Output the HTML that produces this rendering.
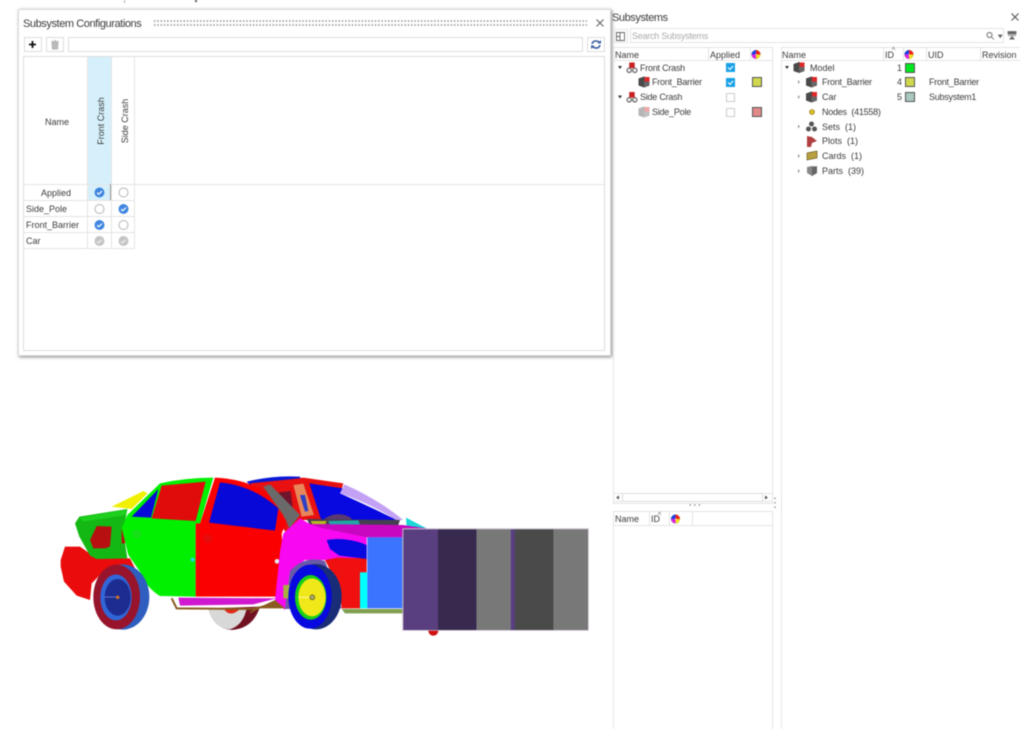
<!DOCTYPE html>
<html><head><meta charset="utf-8"><style>
html,body{margin:0;padding:0;background:#fff;}
#p{position:relative;width:1020px;height:729px;overflow:hidden;background:#fff;font-family:"Liberation Sans",sans-serif;color:#444;filter:blur(.45px);}
.a{position:absolute;box-sizing:border-box;}
.t{position:absolute;white-space:nowrap;font-size:9px;line-height:12px;color:#3c3c3c;}
.n{letter-spacing:-.24px;}
.h{font-size:11px;line-height:14px;letter-spacing:-.42px;}
.l{position:absolute;background:#e4e4e4;}
.sw{position:absolute;width:10px;height:10px;box-sizing:border-box;border:1px solid #555;}
.cb{position:absolute;width:9px;height:9px;box-sizing:border-box;border:1px solid #ccc;background:#fff;}
.cb.on{background:#19a0e6;border-color:#19a0e6;}
svg{position:absolute;overflow:visible;}
</style></head><body><div id="p">

<div class="a" style="left:124px;top:0;width:1px;height:3px;background:#aaa"></div>
<div class="a" style="left:195px;top:0;width:2px;height:2px;background:#555"></div>

<!-- car -->
<svg width="1020" height="729" style="left:0;top:0">
<g transform="translate(250,465) scale(.33333)">
<path d="M-10 50 Q70 30 150 35 L158 60 L40 55 L0 60Z" fill="#0a18d8"/>
<path d="M0 55 L130 42 L160 38 L280 55 L275 72 L215 165 L160 165 L105 200 L60 110Z" fill="#e81010"/>
<path d="M178 55 L278 70 L270 85 Q360 125 440 165 L232 165 L215 170Z" fill="#0808e0"/>
<path d="M283 58 Q380 100 460 165 L438 165 Q360 115 270 85Z" fill="#c3a2f5"/>
<path d="M130 60 L160 56 L192 150 L155 155Z" fill="#e8875a"/>
<path d="M150 90L165 90L175 138L165 140Z" fill="#2a40c8"/>
<path d="M85 82L122 78L128 125L110 125Z" fill="#70142c"/>
<path d="M40 65 L60 58 L150 150 L118 190 L100 150Z" fill="#6a6a6a"/>
<path d="M225 160 Q265 135 305 160 L300 170 L225 170Z" fill="#5a3a70"/>
<path d="M170 162 L450 165 L445 180 L180 180Z" fill="#444050"/>
<path d="M182 168L230 168L225 180L188 180Z" fill="#b8b820"/>
<path d="M235 168L325 166L330 180L240 180Z" fill="#20a8a8"/>
<path d="M468 158 L510 180 L530 190 L470 190Z" fill="#18d8d8"/>
</g>
<g transform="translate(40,465) scale(.33333)">
<path d="M215 125 L310 78 L322 85 L275 132Z" fill="#f0f000"/>
<path d="M75 245 L120 245 L170 280 L270 280 L300 340 L190 320 L155 355 L150 405 L110 392 L72 350 L62 305 L62 285Z" fill="#ea0c0c"/>
<path d="M105 175 L118 155 L262 132 L250 200 L262 280 L170 282 L150 272 L118 215Z" fill="#14b814"/>
<path d="M118 158 L262 134 L258 150 L130 170Z" fill="#1cd01c"/>
<path d="M150 225 L170 183 L215 185 L210 245 L195 250 L160 250Z" fill="#b81010"/>
<path d="M245 190 L255 185 L255 235 L245 235Z" fill="#b81010"/>
<path d="M505 430 Q520 490 575 495 Q640 490 660 425Z" fill="#701020"/>
<path d="M505 430 Q520 490 570 493 Q610 480 620 430Z" fill="#d8d8d8"/>
<path d="M550 430 Q570 460 600 432Z" fill="#e02818"/>
<path d="M415 398 L710 400 L640 418 L420 422Z" fill="#d018d0"/>
<path d="M395 400 L410 430 L640 432 L720 412" fill="none" stroke="#8a5a20" stroke-width="6"/>
<path d="M245 190 L262 150 L360 55 Q440 38 520 38 L480 175 L467 175 L467 395 L360 393 Q320 370 300 320 L265 270Z" fill="#00f000"/>
<ellipse cx="248" cy="396" rx="80" ry="98" fill="#2f5ec0"/>
<ellipse cx="230" cy="396" rx="70" ry="97" fill="#98142c"/>
<ellipse cx="228" cy="397" rx="47" ry="69" fill="#3066d8"/>
<ellipse cx="233" cy="397" rx="39" ry="55" fill="#1c2c90"/>
<path d="M190 396H235" stroke="#6070d0" stroke-width="3"/>
<circle cx="233" cy="397" r="5" fill="#d87020"/>
<path d="M275 155 L355 72 L333 158Z" fill="#0808d8"/>
<path d="M335 160 L365 62 L497 50 L467 168Z" fill="#e00c0c"/>
<path d="M525 38 Q620 42 680 85 L740 170 L725 205 L730 290 L710 395 L467 395 L467 175 L480 175Z" fill="#fb0000"/>
<path d="M507 173 L540 52 Q640 62 715 130 L705 197Z" fill="#0808d8"/>
<circle cx="458" cy="284" r="6" fill="#22d8e8"/>
<circle cx="711" cy="289" r="7" fill="#e8e8e8"/>
<circle cx="290" cy="207" r="14" fill="#16e016"/>
<circle cx="503" cy="220" r="14" fill="#e80c0c"/>
</g>
<g transform="translate(250,465) scale(.33333)">
<path d="M150 160 L180 177 L350 217 L350 290 L250 285 L165 285 L120 320 L105 435 L75 405 L90 260 L100 205Z" fill="#f808f0"/>
<path d="M180 177 L458 180 L530 190 L458 217 L350 217 L210 188Z" fill="#c808c0"/>
<path d="M225 285 L262 278 L350 280 L350 325 L330 325 L330 430 L275 430 L268 370 Z" fill="#f01010"/>
<path d="M230 225 Q290 215 350 240 L350 282 L268 272 L240 252Z" fill="#0808e0"/>
<path d="M120 318 Q165 270 225 288 L275 430 L105 432Z" fill="#6a58a8"/>
<path d="M100 360H120V400H100Z" fill="#a8b040"/>
<path d="M275 432 L458 432 L458 445 L285 445Z" fill="#80a050"/>
<path d="M0 440 L75 405 L105 430 L30 430 L0 445Z" fill="#8a5a20"/>
<ellipse cx="198" cy="395" rx="77" ry="98" fill="#182c78"/>
<ellipse cx="180" cy="395" rx="65" ry="96" fill="#0808e0"/>
<ellipse cx="182" cy="397" rx="47" ry="67" fill="#16d016"/>
<ellipse cx="186" cy="397" rx="41" ry="57" fill="#f0e818"/>
<path d="M145 397H185" stroke="#fff8a0" stroke-width="3"/>
<circle cx="187" cy="397" r="7" fill="#b0b060" stroke="#333" stroke-width="2"/>
<rect x="330" y="322" width="22" height="108" fill="#0ff"/>
<rect x="352" y="217" width="108" height="213" fill="#3b74ff"/>
<circle cx="550" cy="497" r="15" fill="#d01010"/>
<rect x="457" y="190" width="559" height="307" fill="#c8c0cc"/>
<rect x="460" y="193" width="104" height="302" fill="#5a3f80"/>
<rect x="564" y="193" width="116" height="302" fill="#38294f"/>
<rect x="680" y="193" width="102" height="302" fill="#787878"/>
<rect x="782" y="193" width="13" height="302" fill="#5a3f80"/>
<rect x="795" y="193" width="116" height="302" fill="#4a4a4a"/>
<rect x="911" y="193" width="103" height="302" fill="#787878"/>
</g>
</svg>

<!-- dialog -->
<div class="a" style="left:18px;top:9px;width:593px;height:347px;background:#fff;border:1px solid #dcdcdc;box-shadow:1px 1px 3px rgba(0,0,0,.5)"></div>
<div class="t h" style="left:23px;top:17px;">Subsystem Configurations</div>
<div class="a" style="left:153px;top:19px;width:434px;height:8px;background-image:radial-gradient(circle,#999 .75px,transparent 1px);background-size:3.300px 4px"></div>
<svg style="left:596px;top:19px" width="8" height="8"><path d="M.5.5L7.500 7.500M7.500.5L.5 7.500" stroke="#666" stroke-width="1.100"/></svg>

<div class="a" style="left:24px;top:37px;width:18px;height:15px;border:1px solid #ddd"></div>
<svg style="left:29px;top:41px" width="7" height="7"><path d="M3.500 0V7M0 3.500H7" stroke="#111" stroke-width="1.800"/></svg>
<div class="a" style="left:46px;top:37px;width:18px;height:15px;border:1px solid #ddd"></div>
<svg style="left:51px;top:40px" width="8" height="9"><path d="M0 1.500H8M3 .5H5M1 2.500H7L6.500 9H1.500Z" stroke="#aaa" fill="#bbb" stroke-width=".8"/></svg>
<div class="a" style="left:68px;top:37px;width:515px;height:15px;border:1px solid #ddd"></div>
<div class="a" style="left:587px;top:37px;width:18px;height:15px;border:1px solid #ddd"></div>
<svg style="left:591px;top:40px" width="10" height="9"><path d="M1 4Q2 .8 5 1Q7 1 8.500 2.500M9 5Q8 8.200 5 8Q3 8 1.500 6.500" fill="none" stroke="#3a5da0" stroke-width="1.600"/><path d="M6.500 3.500H10V0ZM3.500 5.500H0V9Z" fill="#3a5da0"/></svg>

<div class="a" style="left:23px;top:56px;width:582px;height:295px;border:1px solid #dcdcdc"></div>
<div class="a" style="left:88px;top:57px;width:23px;height:143px;background:#d6f0fb"></div>
<div class="l" style="left:24px;top:184px;width:580px;height:1px"></div>
<div class="l" style="left:87px;top:57px;width:1px;height:191px"></div>
<div class="l" style="left:111px;top:57px;width:1px;height:191px"></div>
<div class="l" style="left:134px;top:57px;width:1px;height:191px"></div>
<div class="l" style="left:24px;top:200px;width:111px;height:1px"></div>
<div class="l" style="left:24px;top:216px;width:111px;height:1px"></div>
<div class="l" style="left:24px;top:232px;width:111px;height:1px"></div>
<div class="l" style="left:24px;top:248px;width:111px;height:1px"></div>
<div class="a" style="left:110px;top:184px;width:1px;height:16px;background:#999"></div>
<div class="t" style="left:45px;top:116px">Name</div>
<div class="t" style="left:41px;top:187px">Applied</div>
<div class="t" style="left:26px;top:203px">Side_Pole</div>
<div class="t" style="left:26px;top:219px">Front_Barrier</div>
<div class="t" style="left:26px;top:235px">Car</div>
<div class="t" style="left:101px;top:121px;transform:translate(-50%,-50%) rotate(-90deg)">Front Crash</div>
<div class="t" style="left:125px;top:121px;transform:translate(-50%,-50%) rotate(-90deg)">Side Crash</div>
<svg style="left:0;top:0" width="140" height="250">
<defs>
<g id="ck"><circle r="5" fill="#3f86e0"/><path d="M-2.400 .2L-.8 1.800L2.400-1.400" fill="none" stroke="#fff" stroke-width="1.200"/></g>
<g id="gk"><circle r="5" fill="#c4c4c4"/><path d="M-2.400 .2L-.8 1.800L2.400-1.400" fill="none" stroke="#eee" stroke-width="1.200"/></g>
<g id="em"><circle r="4.500" fill="#fff" stroke="#b4b4b4" stroke-width="1"/></g>
</defs>
<use href="#ck" x="99.500" y="192.500"/><use href="#em" x="123.500" y="192.500"/>
<use href="#em" x="99.500" y="209"/><use href="#ck" x="123.500" y="209"/>
<use href="#ck" x="99.500" y="225"/><use href="#em" x="123.500" y="225"/>
<use href="#gk" x="99.500" y="241"/><use href="#gk" x="123.500" y="241"/>
</svg>

<!-- right header -->
<div class="t h" style="left:612px;top:11px;">Subsystems</div>
<svg style="left:1011px;top:13px" width="8" height="8"><path d="M.5.5L7.500 7.500M7.500.5L.5 7.500" stroke="#555" stroke-width="1.100"/></svg>
<div class="a" style="left:614px;top:29px;width:14px;height:14px;border:1px solid #e4e4e4"></div>
<svg style="left:616px;top:32px" width="9" height="9"><path d="M.5.5H8.500V8.500H.5ZM4 .5V8.500M.5 4.500H4" fill="none" stroke="#666" stroke-width=".9"/></svg>
<div class="a" style="left:630px;top:28px;width:374px;height:15px;border:1px solid #e4e4e4"></div>
<div class="t n" style="left:632px;top:30px;color:#aaa">Search Subsystems</div>
<svg style="left:986px;top:32px" width="18" height="9"><circle cx="3.500" cy="3" r="2.500" fill="none" stroke="#666"/><path d="M5.500 5L8 7.500M12.500 3H16L14.250 5.500Z" fill="#555" stroke="#666" stroke-width=".8"/></svg>
<svg style="left:1008px;top:31px" width="9" height="9"><path d="M0 .5H8V3H0ZM0 4.500H8M1.500 8.500L4 5.500L6.500 8.500" fill="#666" stroke="#666" stroke-width=".8"/></svg>

<!-- left tree -->
<div class="a" style="left:613px;top:47px;width:160px;height:457px;border:1px solid #e4e4e4"></div>
<div class="l" style="left:614px;top:60px;width:158px;height:1px"></div>
<div class="l" style="left:708px;top:47px;width:1px;height:13px"></div>
<div class="l" style="left:750px;top:47px;width:1px;height:13px"></div>
<div class="t" style="left:615px;top:49px">Name</div>
<div class="t" style="left:710px;top:49px">Applied</div>
<svg style="left:0;top:0" width="1020" height="729">
<defs>
<g id="wh"><circle r="4.500" fill="#22aa44"/><path d="M0 0L0-4.500A4.500 4.500 0 0 1 4.500 0Z" fill="#f02020"/><path d="M0 0L4.500 0A4.500 4.500 0 0 1 0 4.500Z" fill="#f0e020"/><path d="M0 0L0 4.500A4.500 4.500 0 0 1-4.500 0Z" fill="#e020e0"/><path d="M0 0L-4.500 0A4.500 4.500 0 0 1 0-4.500Z" fill="#2040e0"/><circle r=".6" fill="#fff"/></g>
<g id="cfg"><circle cx="-2.800" cy="2.800" r="2.200" fill="#eee" stroke="#555"/><circle cx="2.800" cy="2.800" r="2.200" fill="#eee" stroke="#555"/><rect x="-2.800" y="-5" width="5.500" height="5.500" fill="#c82020"/></g>
<g id="sub"><path d="M-5.500-3.500L0-5.500L5.500-3.500V3.500L0 5.500L-5.500 3.500Z" fill="#4a4a4a"/><path d="M0-1L5.500-3.500V3.500L0 5.500Z" fill="#666"/><rect x=".5" y="-5" width="5" height="4.500" fill="#e02828"/></g>
<path id="tr" d="M-2-1.500H2L0 1.500Z" fill="#333"/>
<path id="tc" d="M-1-2L1 0L-1 2Z" fill="#999"/>
</defs>
<use href="#wh" x="756" y="54.500"/>
<use href="#wh" x="909" y="54.500"/>
<use href="#tr" x="620" y="67.500"/><use href="#cfg" x="632" y="67.500"/>
<use href="#sub" x="644" y="82"/>
<use href="#tr" x="620" y="97"/><use href="#cfg" x="632" y="97"/>
<g opacity=".4"><use href="#sub" x="644" y="112"/></g>
<use href="#tr" x="787" y="67.500"/><use href="#sub" x="799" y="67.500"/>
<use href="#tc" x="799" y="82"/><use href="#sub" x="811.500" y="82"/>
<use href="#tc" x="799" y="97"/><use href="#sub" x="811.500" y="97"/>
<circle cx="812" cy="112" r="2.500" fill="#d8c020" stroke="#887010" stroke-width=".6"/>
<use href="#tc" x="799" y="126.500"/>
<g fill="#555"><circle cx="811.500" cy="124" r="2.500"/><circle cx="808.500" cy="129" r="2.500"/><circle cx="814.500" cy="129" r="2.500"/></g>
<path d="M807 136L812 137L817 141L812 143L811 147L807 147Z" fill="#b04040"/>
<use href="#tc" x="799" y="156"/>
<path d="M807 153L817 151V158L807 160Z" fill="#b8a040" stroke="#6a5a20" stroke-width=".7"/>
<use href="#tc" x="799" y="171"/>
<path d="M807 167L812 166L817 167V173L812 176L807 173Z" fill="#888"/><path d="M812 167L817 166V173L812 176Z" fill="#666"/>
</svg>
<div class="t n" style="left:640px;top:62px">Front Crash</div>
<div class="t n" style="left:652px;top:76px">Front_Barrier</div>
<div class="t n" style="left:640px;top:91px">Side Crash</div>
<div class="t n" style="left:652px;top:106px">Side_Pole</div>
<div class="cb on" style="left:725.500px;top:63px"></div>
<div class="cb on" style="left:725.500px;top:78px"></div>
<svg style="left:725.500px;top:63px" width="9" height="24"><path d="M2 4.500L4 6.500L7 3M2 19.500L4 21.500L7 18" fill="none" stroke="#fff" stroke-width="1.100"/></svg>
<div class="cb" style="left:725.500px;top:93px"></div>
<div class="cb" style="left:725.500px;top:107.500px"></div>
<div class="sw" style="left:752px;top:77px;background:#cfd84e"></div>
<div class="sw" style="left:752px;top:107px;background:#e08a8a"></div>

<!-- scrollbar -->
<div class="a" style="left:614px;top:493px;width:158px;height:9px;background:#fff;border-top:1px solid #e4e4e4;border-bottom:1px solid #e4e4e4"></div>
<div class="a" style="left:622px;top:493px;width:141px;height:9px;border:1px solid #ddd"></div>
<svg style="left:616px;top:495px" width="152" height="5"><path d="M3 .5V4.500L0 2.500ZM149 .5V4.500L152 2.500Z" fill="#555"/></svg>
<div class="a" style="left:688px;top:504px;width:14px;height:2px;background-image:radial-gradient(circle,#999 .7px,transparent 1px);background-size:4.500px 2px"></div>
<div class="a" style="left:774px;top:496px;width:2px;height:12px;background-image:radial-gradient(circle,#999 .7px,transparent 1px);background-size:2px 4.500px"></div>

<!-- lower tree -->
<div class="a" style="left:613px;top:511px;width:160px;height:219px;border:1px solid #e4e4e4;background:#fff"></div>
<div class="l" style="left:614px;top:525px;width:158px;height:1px"></div>
<div class="l" style="left:649px;top:511px;width:1px;height:14px"></div>
<div class="l" style="left:669px;top:511px;width:1px;height:14px"></div>
<div class="l" style="left:692px;top:511px;width:1px;height:14px"></div>
<div class="t" style="left:615px;top:513px">Name</div>
<div class="t" style="left:651px;top:513px">ID</div>
<svg style="left:658px;top:512px" width="3" height="3"><path d="M0 3L1.500 0L3 3" fill="none" stroke="#888" stroke-width=".7"/></svg>
<svg style="left:0;top:0" width="1020" height="729"><use href="#wh" x="675.500" y="519"/></svg>

<!-- right tree -->
<div class="l" style="left:781px;top:47px;width:1px;height:682px"></div>
<div class="l" style="left:781px;top:47px;width:239px;height:1px"></div>
<div class="l" style="left:781px;top:60px;width:239px;height:1px"></div>
<div class="l" style="left:883px;top:47px;width:1px;height:13px"></div>
<div class="l" style="left:903px;top:47px;width:1px;height:13px"></div>
<div class="l" style="left:926px;top:47px;width:1px;height:13px"></div>
<div class="l" style="left:980px;top:47px;width:1px;height:13px"></div>
<div class="t" style="left:782px;top:49px">Name</div>
<div class="t" style="left:885px;top:49px">ID</div>
<svg style="left:892px;top:47px" width="3" height="3"><path d="M0 3L1.500 0L3 3" fill="none" stroke="#888" stroke-width=".7"/></svg>
<div class="t" style="left:928px;top:49px">UID</div>
<div class="t" style="left:982px;top:49px">Revision</div>
<div class="t" style="left:810px;top:62px">Model</div>
<div class="t n" style="left:822px;top:76px">Front_Barrier</div>
<div class="t" style="left:822px;top:91px">Car</div>
<div class="t n" style="left:822px;top:106px">Nodes&nbsp; (41558)</div>
<div class="t" style="left:822px;top:121px">Sets&nbsp; (1)</div>
<div class="t" style="left:822px;top:135px">Plots&nbsp; (1)</div>
<div class="t" style="left:822px;top:150px">Cards&nbsp; (1)</div>
<div class="t" style="left:822px;top:165px">Parts&nbsp; (39)</div>
<div class="t" style="left:897px;top:62px">1</div>
<div class="t" style="left:897px;top:76px">4</div>
<div class="t" style="left:897px;top:91px">5</div>
<div class="sw" style="left:905px;top:63px;background:#00e820"></div>
<div class="sw" style="left:905px;top:77px;background:#cfd84e"></div>
<div class="sw" style="left:905px;top:92px;background:#a8c8c0"></div>
<div class="t n" style="left:929px;top:76px">Front_Barrier</div>
<div class="t n" style="left:929px;top:91px">Subsystem1</div>
</div></body></html>
